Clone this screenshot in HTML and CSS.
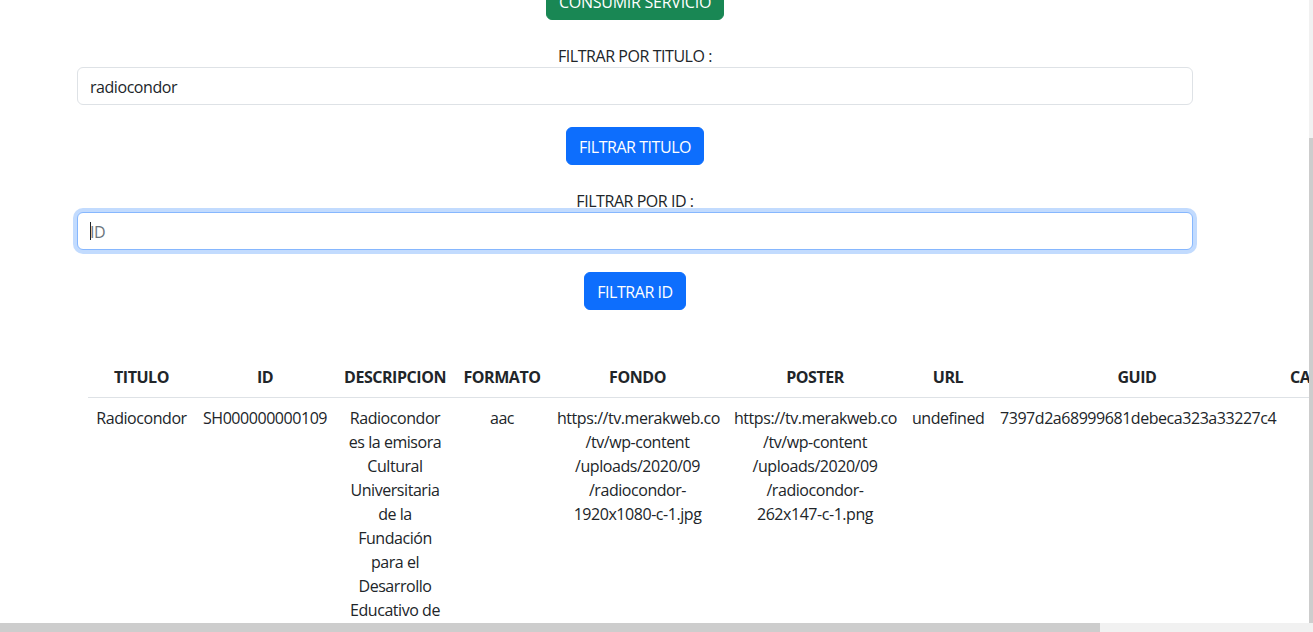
FILE: index.html
```html
<!DOCTYPE html>
<html lang="es">
<head>
<meta charset="utf-8">
<title>Servicio</title>
<link rel="stylesheet" href="styles.css">
</head>
<body>
<div class="page">
  <div class="container">
    <button class="btn btn-success top-btn">CONSUMIR SERVICIO</button>
    <div class="field-label">FILTRAR POR TITULO :</div>
    <input class="form-control" type="text" value="radiocondor" placeholder="TITULO">
    <button class="btn btn-primary">FILTRAR TITULO</button>
    <div class="field-label">FILTRAR POR ID :</div>
    <div class="input-wrap">
      <input class="form-control focused" type="text" placeholder="ID">
      <span class="caret"></span>
    </div>
    <button class="btn btn-primary">FILTRAR ID</button>
  </div>
  <table class="table">
    <colgroup>
      <col class="c-titulo"><col class="c-id"><col class="c-desc"><col class="c-formato"><col class="c-fondo"><col class="c-poster"><col class="c-url"><col class="c-guid"><col class="c-canal">
    </colgroup>
    <thead>
      <tr>
        <th>TITULO</th><th>ID</th><th>DESCRIPCION</th><th>FORMATO</th><th>FONDO</th><th>POSTER</th><th>URL</th><th>GUID</th><th>CANAL</th>
      </tr>
    </thead>
    <tbody>
      <tr>
        <td>Radiocondor</td>
        <td>SH000000000109</td>
        <td>Radiocondor es la emisora Cultural Universitaria de la Fundación para el Desarrollo Educativo de Caldas</td>
        <td>aac</td>
        <td>https://tv.merakweb.co<wbr>/tv/wp-content<wbr>/uploads/2020/09<wbr>/radiocondor-<br>1920x1080-c-1.jpg</td>
        <td>https://tv.merakweb.co<wbr>/tv/wp-content<wbr>/uploads/2020/09<wbr>/radiocondor-<br>262x147-c-1.png</td>
        <td>undefined</td>
        <td>7397d2a68999681debeca323a33227c4</td>
        <td>1</td>
      </tr>
    </tbody>
  </table>
  <div class="vscroll"><div class="vthumb"></div></div>
  <div class="hscroll"><div class="hthumb"></div></div>
</div>
</body>
</html>
```
FILE: styles.css
```css
* { box-sizing: border-box; }
html, body {
  margin: 0;
  padding: 0;
  overflow: hidden;
  background: #fff;
}
body {
  font-family: "Open Sans", "Noto Sans", sans-serif;
  font-size: 16px;
  line-height: 24px;
  color: #212529;
  letter-spacing: -0.45px;
}
.page {
  position: relative;
  width: 1313px;
  height: 632px;
  overflow: hidden;
}
.container {
  width: 1140px;
  margin-left: 65px;
  padding: 0 12px;
  display: flex;
  flex-direction: column;
  align-items: center;
}
.btn {
  font-family: inherit;
  font-size: 16px;
  line-height: 24px;
  letter-spacing: -0.45px;
  padding: 7px 12px 5px;
  border: 1px solid transparent;
  border-radius: 6px;
  color: #fff;
  margin-top: 22px;
}
.btn-success { background: #198754; border-color: #198754; }
.btn-primary { background: #0d6efd; border-color: #0d6efd; }
.top-btn {
  margin-top: -18px;
  letter-spacing: -0.25px;
}
.field-label {
  margin-top: 23px;
  height: 24px;
  padding-top: 1px;
}
.form-control {
  display: block;
  width: 1116px;
  height: 38px;
  padding: 7px 12px 5px;
  font-family: inherit;
  font-size: 16px;
  letter-spacing: -0.45px;
  color: #212529;
  background: #fff;
  border: 1px solid #dee2e6;
  border-radius: 6px;
  outline: none;
}
.form-control::placeholder { color: #6c757d; }
.form-control.focused {
  border-color: #86b7fe;
  box-shadow: 0 0 0 4px rgba(13, 110, 253, 0.25);
}
.input-wrap { position: relative; }
.caret {
  position: absolute;
  left: 13px;
  top: 10px;
  width: 1px;
  height: 18px;
  background: #212529;
}
.table {
  margin-top: 47px;
  margin-left: 88px;
  border-collapse: collapse;
  table-layout: fixed;
  width: 1294px;
}
.c-titulo { width: 107px; }
.c-id { width: 140px; }
.c-desc { width: 120px; }
.c-formato { width: 94px; }
.c-fondo { width: 177px; }
.c-poster { width: 178px; }
.c-url { width: 88px; }
.c-guid { width: 290px; }
.c-canal { width: 100px; }
.table th, .table td {
  padding: 8px;
  text-align: center;
  vertical-align: top;
  border-bottom: 1px solid #dee2e6;
}
.table th { font-weight: 700; }
.table th:last-child { text-align: left; }
.vscroll {
  position: absolute;
  right: 0;
  top: 0;
  width: 4px;
  height: 623px;
  background: #f1f1f1;
}
.vthumb {
  position: absolute;
  left: 0;
  right: 0;
  top: 138px;
  bottom: 0;
  background: #cdcdcd;
}
.hscroll {
  position: absolute;
  left: 0;
  bottom: 0;
  width: 1313px;
  height: 9px;
  background: #f1f1f1;
}
.hthumb {
  width: 1100px;
  height: 9px;
  background: #cdcdcd;
}
```
